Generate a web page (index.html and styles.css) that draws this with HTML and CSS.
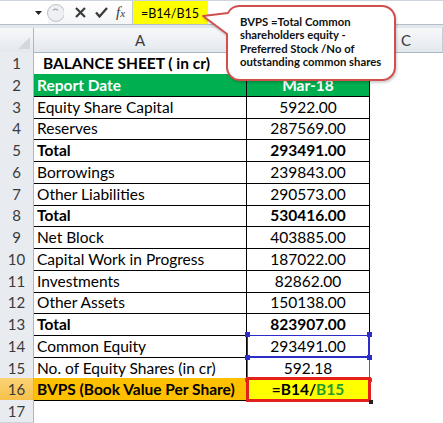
FILE: index.html
```html
<!DOCTYPE html>
<html lang="en">
<head>
    <meta charset="UTF-8">
    <meta name="viewport" content="width=device-width, initial-scale=1.0">
    <title>Book Value Per Share</title>
    <link rel="stylesheet" href="styles.css">
</head>
<body>
    <div class="window">
        <div class="formula-bar">
            <div class="name-box">
                <svg class="dropdown" width="7" height="4" viewBox="0 0 7 4"><path d="M0 0H7L3.5 4Z" fill="#222"/></svg>
            </div>
            <div class="tools">
                <svg class="splitter" width="18" height="20" viewBox="0 0 18 20">
                    <circle cx="10" cy="10" r="8.5" fill="#eef0f3" stroke="#b9c0c9"/>
                    <path d="M7 7.5a3 3 0 0 1 5 0" fill="none" stroke="#9aa2ad" stroke-width="1.2"/>
                </svg>
                <svg class="tool-icon" width="11" height="11" viewBox="0 0 11 11"><path d="M1 1L10 10M10 1L1 10" stroke="#3b3b3b" stroke-width="2.2"/></svg>
                <svg class="tool-icon" width="13" height="11" viewBox="0 0 13 11"><path d="M1 5.5L4.5 9.5L12 1" fill="none" stroke="#3b3b3b" stroke-width="2.3"/></svg>
                <span class="fx">f<i>x</i></span>
            </div>
            <div class="formula-input">
                <span class="formula-text">=B14/B15</span>
            </div>
        </div>
        <div class="bar-gap"></div>

        <div class="sheet">
            <div class="row heads">
                <div class="corner"><svg width="12" height="12" viewBox="0 0 12 12"><path d="M12 0V12H0Z" fill="#d3d8de"/></svg></div>
                <div class="col-head">A</div>
                <div class="col-head"></div>
                <div class="col-head">C</div>
            </div>
            <div class="row">
                <div class="rh">1</div>
                <div class="cell a title">BALANCE SHEET ( in cr)</div>
                <div class="cell b title"></div>
                <div class="cell c"></div>
            </div>
            <div class="row green">
                <div class="rh">2</div>
                <div class="cell a">Report Date</div>
                <div class="cell b">Mar-18</div>
                <div class="cell c"></div>
            </div>
            <div class="row data">
                <div class="rh">3</div>
                <div class="cell a">Equity Share Capital</div>
                <div class="cell b">5922.00</div>
                <div class="cell c"></div>
            </div>
            <div class="row data">
                <div class="rh">4</div>
                <div class="cell a">Reserves</div>
                <div class="cell b">287569.00</div>
                <div class="cell c"></div>
            </div>
            <div class="row data total">
                <div class="rh">5</div>
                <div class="cell a">Total</div>
                <div class="cell b">293491.00</div>
                <div class="cell c"></div>
            </div>
            <div class="row data">
                <div class="rh">6</div>
                <div class="cell a">Borrowings</div>
                <div class="cell b">239843.00</div>
                <div class="cell c"></div>
            </div>
            <div class="row data">
                <div class="rh">7</div>
                <div class="cell a">Other Liabilities</div>
                <div class="cell b">290573.00</div>
                <div class="cell c"></div>
            </div>
            <div class="row data total">
                <div class="rh">8</div>
                <div class="cell a">Total</div>
                <div class="cell b">530416.00</div>
                <div class="cell c"></div>
            </div>
            <div class="row data">
                <div class="rh">9</div>
                <div class="cell a">Net Block</div>
                <div class="cell b">403885.00</div>
                <div class="cell c"></div>
            </div>
            <div class="row data">
                <div class="rh">10</div>
                <div class="cell a">Capital Work in Progress</div>
                <div class="cell b">187022.00</div>
                <div class="cell c"></div>
            </div>
            <div class="row data">
                <div class="rh">11</div>
                <div class="cell a">Investments</div>
                <div class="cell b">82862.00</div>
                <div class="cell c"></div>
            </div>
            <div class="row data">
                <div class="rh">12</div>
                <div class="cell a">Other Assets</div>
                <div class="cell b">150138.00</div>
                <div class="cell c"></div>
            </div>
            <div class="row data total">
                <div class="rh">13</div>
                <div class="cell a">Total</div>
                <div class="cell b">823907.00</div>
                <div class="cell c"></div>
            </div>
            <div class="row data">
                <div class="rh">14</div>
                <div class="cell a">Common Equity</div>
                <div class="cell b ref-blue">293491.00
                    <span class="handle tl"></span><span class="handle tr"></span>
                    <span class="handle bl"></span><span class="handle br"></span>
                </div>
                <div class="cell c"></div>
            </div>
            <div class="row data">
                <div class="rh">15</div>
                <div class="cell a">No. of Equity Shares (in cr)</div>
                <div class="cell b ref-green">592.18
                    <span class="handle bl"></span><span class="handle br"></span>
                </div>
                <div class="cell c"></div>
            </div>
            <div class="row data result">
                <div class="rh active">16</div>
                <div class="cell a">BVPS (Book Value Per Share)</div>
                <div class="cell b">=B14/<span class="ref">B15</span><span class="fill-handle"></span></div>
                <div class="cell c"></div>
            </div>
            <div class="row">
                <div class="rh">17</div>
                <div class="cell a"></div>
                <div class="cell b"></div>
                <div class="cell c"></div>
            </div>
        </div>

        <div class="callout">
            <svg width="206" height="86" viewBox="0 0 206 86">
                <path d="M41 6H183A13 13 0 0 1 196 19V67A13 13 0 0 1 183 80H41A13 13 0 0 1 28 67V34L4 16L29 13A13 13 0 0 1 41 6Z"
                      fill="#fff" stroke="#d0504e" stroke-width="2" stroke-linejoin="round"/>
            </svg>
            <p>BVPS =Total Common shareholders equity - Preferred Stock /No of outstanding common shares</p>
        </div>
    </div>
</body>
</html>
```

FILE: styles.css
```css
body {
    margin: 0;
    background-color: #fff;
    font-family: Lato, "Open Sans", sans-serif;
    color: #000;
}
.window {
    position: relative;
    width: 443px;
    height: 423px;
    overflow: hidden;
}

/* formula bar */
.formula-bar {
    display: flex;
    height: 25px;
    border-top: 1px solid #cfd5dc;
    border-bottom: 1px solid #b6bec8;
    box-sizing: border-box;
}
.name-box {
    width: 48px;
    display: flex;
    align-items: center;
    justify-content: flex-end;
    padding-right: 6px;
    box-sizing: border-box;
}
.tools {
    width: 84px;
    display: flex;
    align-items: center;
    gap: 9px;
    background: linear-gradient(#fff, #f3f5f7);
}
.splitter {
    margin-left: -2px;
    margin-right: 2px;
}
.fx {
    font-family: "Liberation Serif", serif;
    font-style: italic;
    font-size: 15px;
    color: #3b3b3b;
    margin-left: -1px;
}
.fx i {
    font-size: 11px;
}
.formula-input {
    flex: 1;
    border-left: 1px solid #c3c9d1;
}
.formula-text {
    display: inline-block;
    height: 23px;
    width: 75px;
    padding-left: 8px;
    box-sizing: border-box;
    background-color: #ffff00;
    font-size: 12.5px;
    line-height: 25px;
}
.bar-gap {
    height: 3px;
    background-color: #e2e7ed;
}

/* sheet */
.row {
    display: grid;
    grid-template-columns: 34px 213px 123px 1fr;
    height: 21.75px;
}
.row.heads {
    height: 24px;
}
.corner, .col-head {
    background: linear-gradient(#f7f8fa, #e4e8ed);
    border-bottom: 1px solid #a9b6c5;
    border-right: 1px solid #c6ced8;
    box-sizing: border-box;
}
.corner {
    display: flex;
    align-items: flex-end;
    justify-content: flex-end;
    padding: 0 3px 3px 0;
    border-right-color: #a9b6c5;
}
.col-head {
    text-align: center;
    font-size: 15px;
    line-height: 24px;
    color: #3a3a3a;
}
.rh {
    background-color: #e8ecf1;
    border-right: 1px solid #a9b6c5;
    border-bottom: 1px solid #cdd4dd;
    box-sizing: border-box;
    text-align: center;
    font-size: 15px;
    line-height: 22px;
    color: #3a3a3a;
}
.rh.active {
    background: linear-gradient(#fbd476, #f6c04a);
    border-bottom-color: #e0a93a;
}
.cell {
    box-sizing: border-box;
    font-size: 15.5px;
    line-height: 22px;
    white-space: nowrap;
    overflow: hidden;
}
.cell.a {
    padding-left: 3px;
}
.cell.b {
    text-align: center;
}
.title {
    border-bottom: 1px solid #000;
    font-weight: bold;
}
.cell.a.title {
    padding-left: 9px;
}
.green .cell.a, .green .cell.b {
    background-color: #00b050;
    color: #fff;
    font-weight: bold;
    border-right: 1px solid #000;
    border-bottom: 1px solid #000;
}
.data .cell.a, .data .cell.b {
    border-right: 1px solid #000;
    border-bottom: 1px solid #000;
}
.total .cell {
    font-weight: bold;
}

/* formula references */
.ref-blue, .ref-green {
    position: relative;
    overflow: visible;
}
.ref-blue {
    box-shadow: inset 0 0 0 1px #2c2cc8;
    border-right-color: #2c2cc8 !important;
    border-bottom-color: #2c2cc8 !important;
    z-index: 2;
}
.ref-green {
    box-shadow: inset 1px 0 0 #2f8f2f;
    border-right-color: #2f8f2f !important;
    border-bottom-color: #2f8f2f !important;
    z-index: 1;
}
.handle {
    position: absolute;
    width: 5px;
    height: 5px;
    background-color: #2c2cc8;
}
.ref-green .handle {
    background-color: #2f8f2f;
    width: 4px;
    height: 4px;
}
.handle.tl { top: -3px; left: -2px; }
.handle.tr { top: -3px; right: -3px; }
.handle.bl { bottom: -3px; left: -2px; }
.handle.br { bottom: -3px; right: -3px; }

.result .cell.a {
    background-color: #ffc000;
    font-weight: bold;
}
.result .cell.b {
    position: relative;
    overflow: visible;
    background-color: #ffff00;
    font-weight: bold;
    outline: 3px solid #e3211c;
    outline-offset: -2px;
    z-index: 3;
}
.ref {
    color: #1f9b30;
}
.fill-handle {
    position: absolute;
    right: -4px;
    bottom: -4px;
    width: 4px;
    height: 4px;
    background-color: #222;
}

/* callout */
.callout {
    position: absolute;
    left: 199px;
    top: 0;
    width: 206px;
    height: 86px;
    z-index: 5;
}
.callout svg {
    display: block;
    filter: drop-shadow(1px 2px 1px rgba(0,0,0,0.18));
}
.callout p {
    position: absolute;
    left: 41px;
    top: 15px;
    width: 152px;
    margin: 0;
    font-size: 11.3px;
    font-weight: bold;
    line-height: 13.4px;
    color: #111;
}
```
